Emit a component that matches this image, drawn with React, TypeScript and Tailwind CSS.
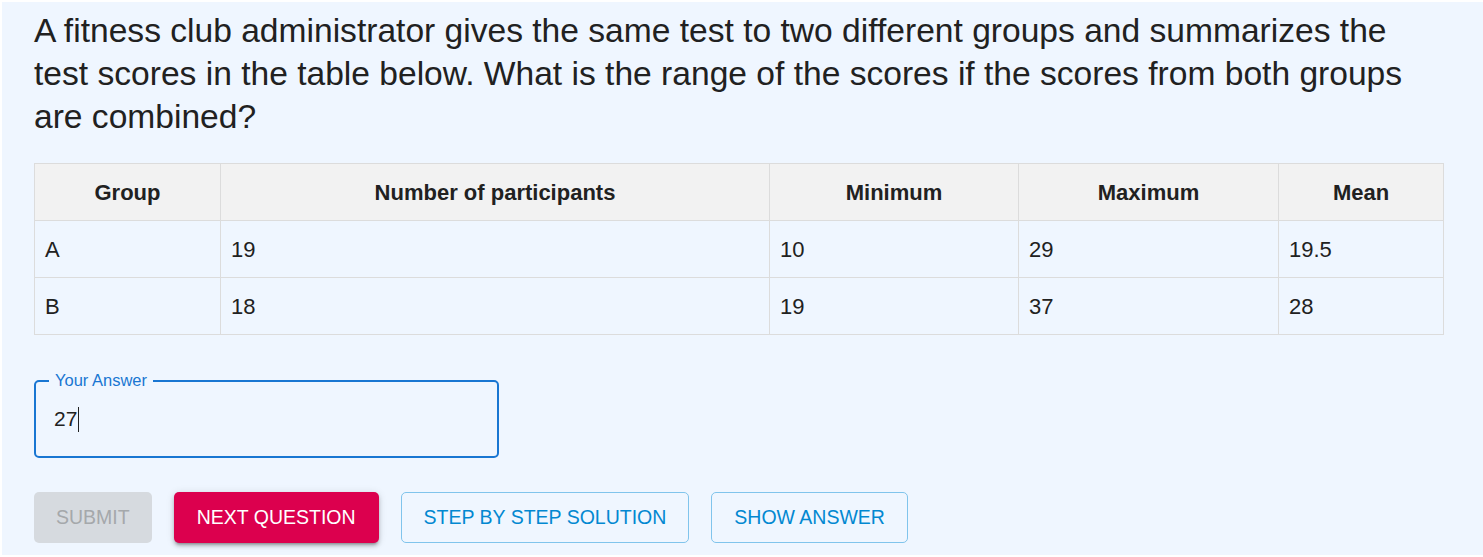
const rows = [
  ['A', '19', '10', '29', '19.5'],
  ['B', '18', '19', '37', '28'],
];

const headers = ['Group', 'Number of participants', 'Minimum', 'Maximum', 'Mean'];
const widths = ['w-[186px]', 'w-[549px]', 'w-[249px]', 'w-[260px]', 'w-[165px]'];

export default function App() {
  return (
    <div className="w-full h-[557px] bg-white pt-[2px] pl-[2px] font-['Liberation_Sans',Arial,sans-serif] text-[#212121]">
      <div className="h-[553px] bg-[#eff6ff] pl-[32px] pr-[38px] pt-[7px]">
        {/* Question */}
        <p className="text-[33.6px] leading-[43px] max-w-[1390px]">
          A fitness club administrator gives the same test to two different groups and summarizes the test
          scores in the table below. What is the range of the scores if the scores from both groups are combined?
        </p>

        {/* Table */}
        <table className="mt-[25px] w-[1409px] table-fixed border-collapse text-[22px]">
          <thead>
            <tr className="h-[57px] bg-[#f2f2f2]">
              {headers.map((h, i) => (
                <th key={h} className={`${widths[i]} border border-[#dcdcdc] font-bold text-center`}>
                  {h}
                </th>
              ))}
            </tr>
          </thead>
          <tbody>
            {rows.map((r) => (
              <tr key={r[0]} className="h-[57px]">
                {r.map((c, i) => (
                  <td key={i} className="border border-[#dcdcdc] px-[10px] text-left">
                    {c}
                  </td>
                ))}
              </tr>
            ))}
          </tbody>
        </table>

        {/* Answer field */}
        <div className="relative mt-[45px] w-[465px] h-[78px] rounded-[5px] border-2 border-[#1976d2] flex items-center pl-[18px]">
          <span className="absolute -top-[12px] left-[13px] bg-[#eff6ff] px-[6px] text-[16.5px] leading-[20px] text-[#1976d2]">
            Your Answer
          </span>
          <span className="text-[21px]">27</span>
          <span className="ml-px w-px h-[25px] bg-[#212121]" />
        </div>

        {/* Actions */}
        <div className="mt-[34px] flex gap-[22px] text-[19.5px]">
          <button className="h-[51px] px-[22px] rounded-[5px] uppercase bg-[#d6dadf] text-[#a5a8ab]">Submit</button>
          <button className="h-[51px] px-[23px] rounded-[5px] uppercase bg-[#dc004e] text-white shadow-[0_3px_3px_-2px_rgba(0,0,0,0.3),0_3px_4px_0_rgba(0,0,0,0.18),0_1px_8px_0_rgba(0,0,0,0.12)]">
            Next Question
          </button>
          <button className="h-[51px] px-[22px] rounded-[5px] uppercase border border-[#80c4ec] text-[#0288d1]">
            Step by step solution
          </button>
          <button className="h-[51px] px-[22px] rounded-[5px] uppercase border border-[#80c4ec] text-[#0288d1]">
            Show Answer
          </button>
        </div>
      </div>
    </div>
  );
}
